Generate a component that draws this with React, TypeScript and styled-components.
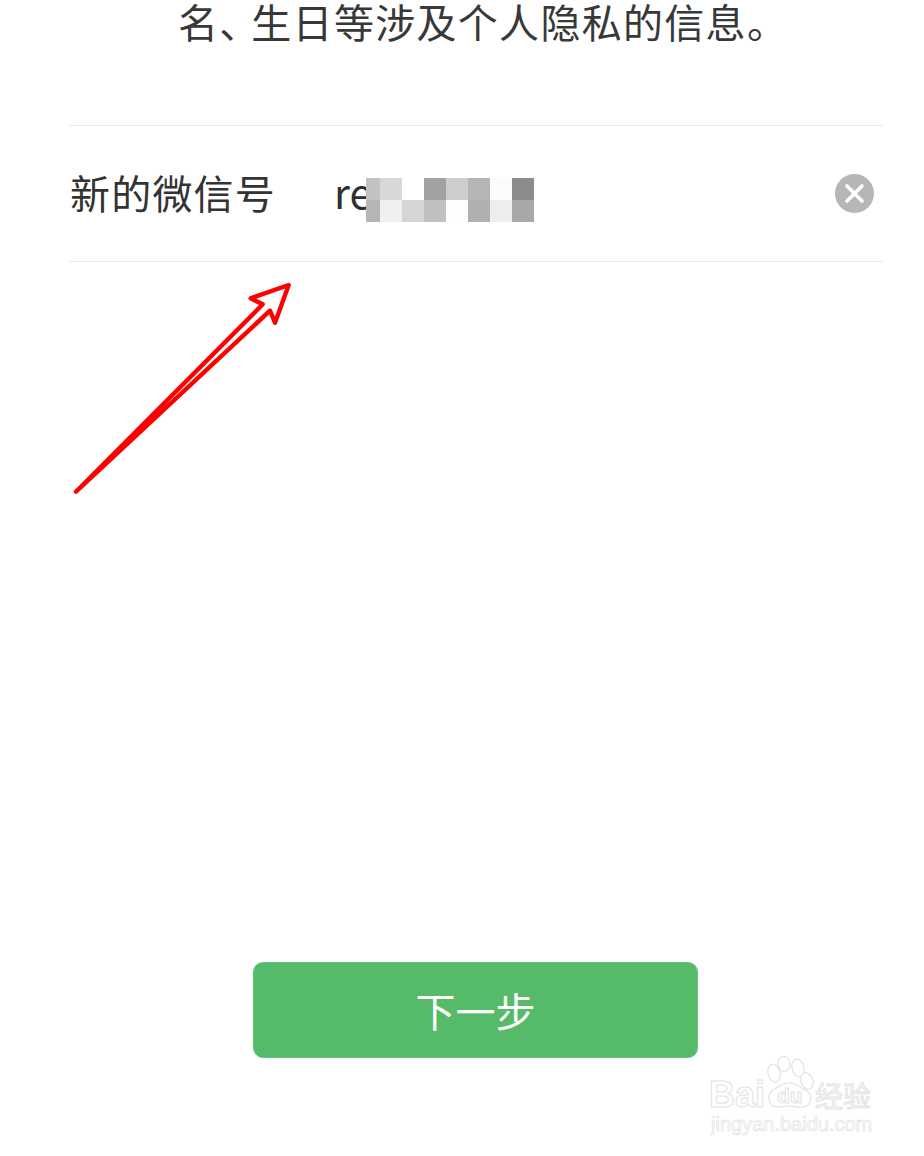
import React from "react";
import styled, { createGlobalStyle } from "styled-components";

const cjk = '"Noto Sans CJK SC", "Noto Sans", sans-serif';

const Global = createGlobalStyle`
  html, body { margin: 0; padding: 0; background: #fff; }
  body { font-family: ${cjk}; }
`;

const Page = styled.main`
  position: relative;
  width: 924px;
  height: 1156px;
  overflow: hidden;
  background: #fff;
  display: flex;
  flex-direction: column;
`;

const Notice = styled.p`
  margin: 0;
  height: 125px;
  padding-left: 178px;
  box-sizing: border-box;
  font-size: 40px;
  line-height: 42px;
  letter-spacing: 1.3px;
  color: #383838;
  white-space: nowrap;
`;

const TightPunct = styled.span`
  letter-spacing: -8px;
`;

const Field = styled.section`
  margin: 0 41px 0 69px;
  height: 137px;
  box-sizing: border-box;
  border-top: 1px solid #e9e9e9;
  border-bottom: 1px solid #e9e9e9;
  display: flex;
  align-items: center;
`;

const Label = styled.span`
  width: 265px;
  flex: none;
  margin-top: -4px;
  padding-left: 1px;
  box-sizing: border-box;
  font-size: 40px;
  letter-spacing: 1.2px;
  color: #333;
  white-space: nowrap;
`;

const Value = styled.div`
  flex: 1;
  display: flex;
  align-items: center;
`;

const Typed = styled.span`
  width: 32px;
  flex: none;
  margin-top: -5px;
  font-size: 41px;
  color: #2f2f2f;
  white-space: nowrap;
`;

const Mosaic = styled.div`
  position: relative;
  display: grid;
  margin-top: 13px;
  grid-template-columns: 14px repeat(7, 22px);
  grid-auto-rows: 22px;
`;

const Tile = styled.i<{ $shade: string }>`
  display: block;
  background: ${(p) => p.$shade};
`;

const ClearButton = styled.button`
  width: 39px;
  height: 39px;
  margin-right: 9px;
  padding: 0;
  border: 0;
  background: none;
  flex: none;
  svg { display: block; }
`;

const Spacer = styled.div`
  height: 700px;
  flex: none;
`;

const NextButton = styled.button`
  align-self: flex-start;
  margin-left: 253px;
  width: 445px;
  height: 96px;
  border: 1px solid #62c67c;
  border-radius: 10px;
  background: #56bb69;
  color: #fff;
  font-family: ${cjk};
  font-size: 40px;
  font-weight: 400;
  letter-spacing: 0;
  padding: 0;
`;

const Arrow = styled.svg`
  position: absolute;
  left: 0;
  top: 0;
  pointer-events: none;
`;

const Watermark = styled.div`
  position: absolute;
  left: 708px;
  top: 1056px;
  width: 170px;
  height: 80px;
`;

const Outline = styled.span`
  position: absolute;
  color: #fff;
  -webkit-text-stroke: 1px #e2e2e2;
  white-space: nowrap;
  font-family: "Liberation Sans", ${cjk};
`;

const Bai = styled(Outline)`
  left: 1px;
  top: 17px;
  font-size: 36px;
  line-height: 44px;
  font-weight: 700;
`;

const Du = styled(Outline)`
  left: 69px;
  top: 28px;
  font-size: 21px;
  line-height: 24px;
  font-weight: 700;
`;

const Jingyan = styled(Outline)`
  left: 107px;
  top: 21px;
  font-size: 28px;
  line-height: 36px;
  font-family: ${cjk};
  font-weight: 400;
`;

const Site = styled(Outline)`
  left: 3px;
  top: 56px;
  font-size: 20px;
  line-height: 24px;
  -webkit-text-stroke: 0.7px #e2e2e2;
`;

const Paw = styled.svg`
  position: absolute;
  left: 52px;
  top: 0;
`;

const row1 = ["#c2c2c2", "#d8d8d8", "#ffffff", "#a2a2a2", "#cdcdcd", "#b5b5b5", "#fcfcfc", "#8c8c8c"];
const row2 = ["#b5b5b5", "#f0f0f0", "#d5d5d5", "#c0c0c0", "#fdfdfd", "#b0b0b0", "#eeeeee", "#a8a8a8"];

export default function App() {
  return (
    <Page>
      <Global />
      <Notice>
        名<TightPunct>、</TightPunct>生日等涉及个人隐私的信息。
      </Notice>
      <Field>
        <Label>新的微信号</Label>
        <Value>
          <Typed>re</Typed>
          <Mosaic>
            {[...row1, ...row2].map((s, i) => (
              <Tile key={i} $shade={s} />
            ))}
          </Mosaic>
        </Value>
        <ClearButton aria-label="清除">
          <svg width="39" height="39" viewBox="0 0 39 39">
            <circle cx="19.5" cy="19.5" r="19.5" fill="#b6b6b6" />
            <path d="M12 12 L27 27 M27 12 L12 27" stroke="#fff" strokeWidth="3.6" strokeLinecap="round" />
          </svg>
        </ClearButton>
      </Field>
      <Spacer />
      <NextButton>下一步</NextButton>
      <Arrow width="924" height="1156" viewBox="0 0 924 1156">
        <path
          d="M76 491.7 L262.7 304.3 L250.7 298.3 L288.7 285 L275 322.7 L270 310.7 Z"
          fill="none"
          stroke="#ff0000"
          strokeWidth="4.4"
          strokeLinejoin="round"
        />
      </Arrow>
      <Watermark>
        <Bai>Bai</Bai>
        <Paw width="62" height="56" viewBox="0 0 62 56" fill="#fff" stroke="#e2e2e2" strokeWidth="1.2">
          <ellipse cx="14" cy="17" rx="6" ry="9" transform="rotate(-15 14 17)" />
          <ellipse cx="24" cy="8" rx="6" ry="7.5" transform="rotate(-8 24 8)" />
          <ellipse cx="38" cy="12" rx="6" ry="9" transform="rotate(-14 38 12)" />
          <ellipse cx="47" cy="25" rx="6" ry="8.5" transform="rotate(-20 47 25)" />
          <path d="M29 27 C21 27 19 31 13 34 C7 38 7 51 18 51 C23 51 26 50 30 50 C35 50 38 52 43 51 C52 50 53 39 47 35 C41 32 37 27 29 27 Z" />
        </Paw>
        <Du>du</Du>
        <Jingyan>经验</Jingyan>
        <Site>jingyan.baidu.com</Site>
      </Watermark>
    </Page>
  );
}
